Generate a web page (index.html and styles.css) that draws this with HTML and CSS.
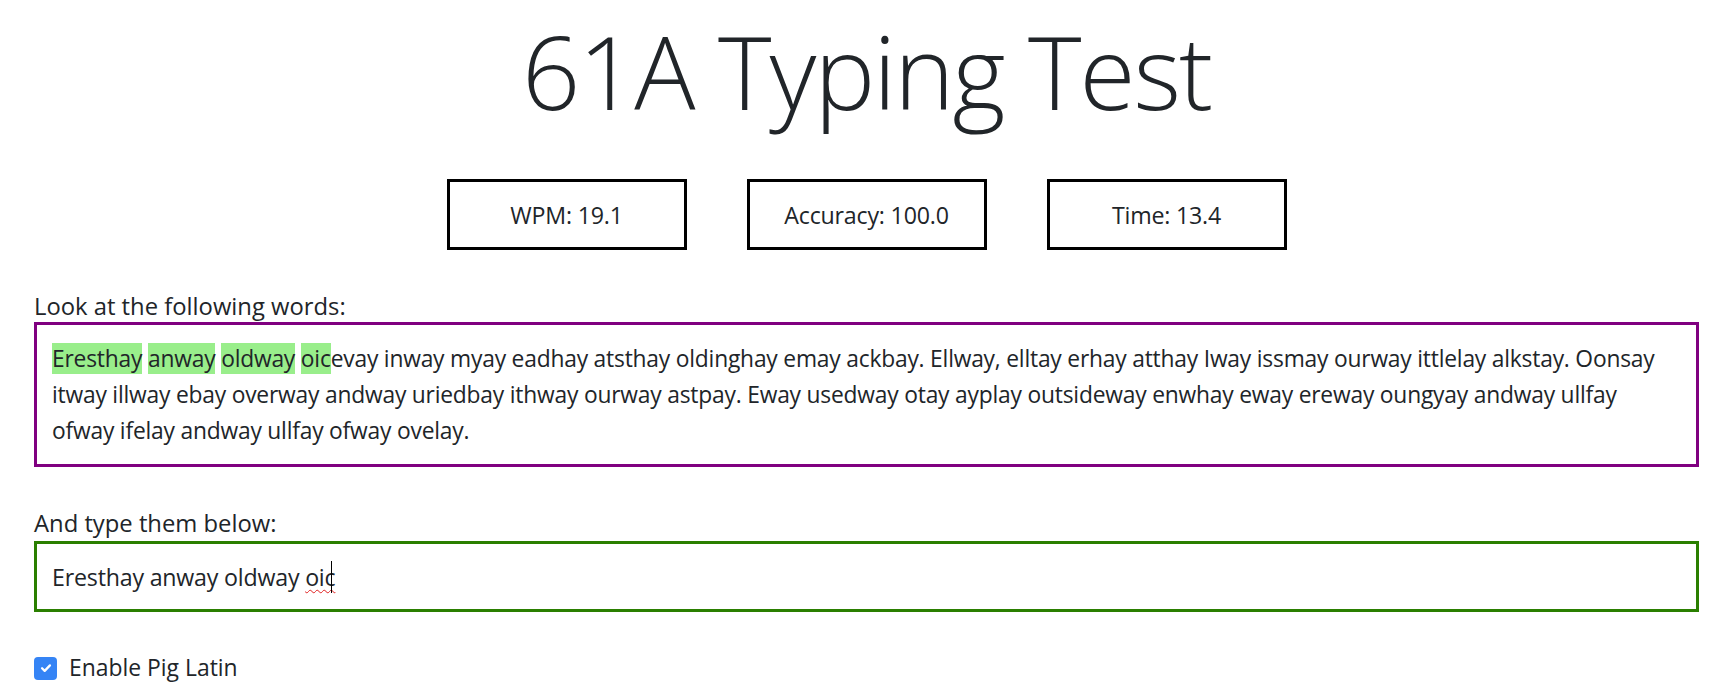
FILE: index.html
```html
<!DOCTYPE html>
<html lang="en">
<head>
<meta charset="utf-8">
<title>61A Typing Test</title>
<link rel="stylesheet" href="styles.css">
</head>
<body>
<div class="page">
  <h1 class="title">61A Typing Test</h1>
  <div class="stats">
    <div class="stat">WPM: 19.1</div>
    <div class="stat">Accuracy: 100.0</div>
    <div class="stat">Time: 13.4</div>
  </div>
  <div class="label">Look at the following words:</div>
  <div class="prompt"><span class="ok">Eresthay</span> <span class="ok">anway</span> <span class="ok">oldway</span> <span class="ok">oic</span>evay inway myay eadhay atsthay oldinghay emay ackbay. Ellway, elltay erhay atthay Iway issmay ourway ittlelay alkstay. Oonsay itway illway ebay overway andway uriedbay ithway ourway astpay. Eway usedway otay ayplay outsideway enwhay eway ereway oungyay andway ullfay ofway ifelay andway ullfay ofway ovelay.</div>
  <div class="label label-second">And type them below:</div>
  <div class="typed">Eresthay anway oldway <span class="misspelled">oic</span><span class="caret"></span></div>
  <label class="check-row">
    <span class="checkbox"><svg viewBox="0 0 16 16" width="14" height="14"><path d="M3.5 8.3l3 3 6-6.3" fill="none" stroke="#fff" stroke-width="2.6" stroke-linecap="round" stroke-linejoin="round"/></svg></span>
    <span class="check-label">Enable Pig Latin</span>
  </label>
</div>
</body>
</html>
```
FILE: styles.css
```css
html, body {
  margin: 0;
  padding: 0;
  background: #fff;
}
body {
  font-family: "Open Sans", "Noto Sans", "Liberation Sans", sans-serif;
  color: #212529;
}
.page {
  margin: 0 37px 0 34px;
  display: flex;
  flex-direction: column;
}
.title {
  margin: 6px 0 0;
  font-size: 102px;
  font-weight: 300;
  line-height: 130px;
  text-align: center;
  letter-spacing: -2px;
}
.stats {
  margin-top: 43px;
  display: flex;
  justify-content: center;
  gap: 60px;
}
.stat {
  box-sizing: border-box;
  width: 240px;
  height: 71px;
  border: 3px solid #000;
  display: flex;
  align-items: center;
  justify-content: center;
  font-size: 23.2px;
  letter-spacing: -0.2px;
}
.label {
  margin-top: 41px;
  font-size: 23.8px;
  line-height: 30px;
  height: 30px;
  margin-bottom: 1px;
}
.label-second {
  margin-top: 41px;
  margin-bottom: 3px;
}
.prompt {
  border: 3px solid #800080;
  padding: 16px 15px 15px;
  font-size: 22.8px;
  line-height: 36px;
  letter-spacing: -0.2px;
}
.ok {
  background: #99ee8b;
}
.typed {
  border: 3px solid #2a7f00;
  padding: 15px 15px 14px;
  font-size: 23.2px;
  line-height: 36px;
  height: 36px;
  letter-spacing: -0.2px;
}
.misspelled {
  text-decoration: underline wavy #e02020;
  text-decoration-thickness: 1px;
  text-underline-offset: 3px;
}
.caret {
  display: inline-block;
  width: 1px;
  height: 32px;
  background: #000;
  vertical-align: -7px;
  margin-left: -4px;
}
.check-row {
  margin-top: 38px;
  display: flex;
  align-items: center;
  gap: 12px;
  font-size: 22.9px;
  line-height: 36px;
}
.checkbox {
  width: 23px;
  height: 23px;
  border-radius: 4px;
  background: #3584f5;
  display: flex;
  align-items: center;
  justify-content: center;
}
```
